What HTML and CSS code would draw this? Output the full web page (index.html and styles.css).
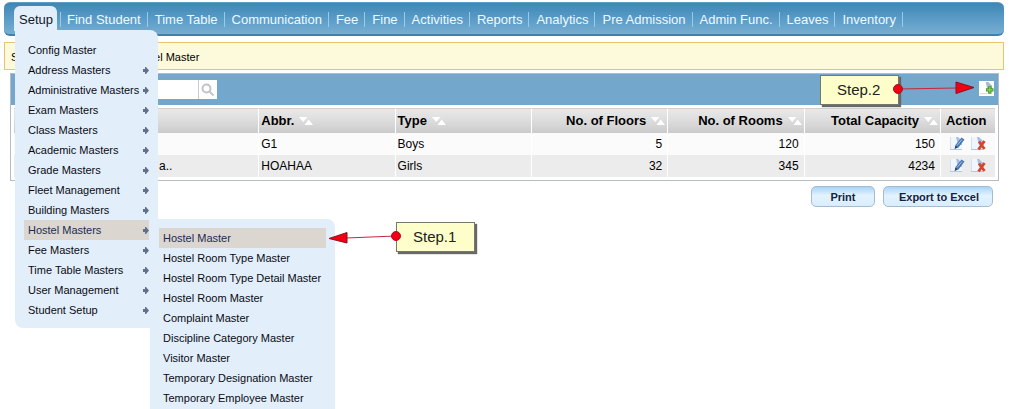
FILE: index.html
```html
<!DOCTYPE html>
<html lang="en">
<head>
<meta charset="utf-8">
<title>Hostel Master</title>
<link rel="stylesheet" href="styles.css">
</head>
<body>
<svg class="defs" width="0" height="0" aria-hidden="true">
  <symbol id="sort" viewBox="0 0 14 8"><path d="M0 0h8.500L4.200 5zM5.500 8h8.500L9.700 2.500z" fill="#fff"/></symbol>
  <symbol id="arrow" viewBox="0 0 6 7"><path d="M0 2h2V0h1l3 3.500L3 7H2V5H0z" fill="#62708c"/></symbol>
  <symbol id="page" viewBox="0 0 16 16"><path d="M1 1h8l4 4v9H1z" fill="#f1f6fd"/><path d="M1 13.500h12" stroke="#b5c6e0" fill="none"/><path d="M1.500 1v12" stroke="#d5dfee"/><path d="M7 1h2l4 4v4H9z" fill="#a9bfe2"/></symbol>
  <symbol id="edit" viewBox="0 0 16 16"><use href="#page"/><path d="M6 12.500 6.500 9 12.500 1.500 15.500 3.500 9.500 11.500z" fill="#4778b2"/><path d="M8 9.500 13 3.500" stroke="#a9c9ea"/><path d="M5.500 13 6.500 9.500 8.500 11.500z" fill="#243c66"/></symbol>
  <symbol id="remove" viewBox="0 0 16 16"><use href="#page"/><path d="M9 5.500l5.500 7.500M14.500 5l-6 8.500" stroke="#d4472f" stroke-width="2.800"/></symbol>
  <symbol id="add" viewBox="0 0 16 16"><path d="M0 0h16v16H0z" fill="#fff"/><path d="M7 1h3l4 4v4H9z" fill="#a9bad0"/><path d="M1 13.500h8" stroke="#cbd5e2"/><path d="M11.500 5.500v8M7.500 9.500h8" stroke="#43962b" stroke-width="3.600"/><path d="M11.500 6.500v6M8.500 9.500h6" stroke="#8edb55" stroke-width="1.200"/></symbol>
</svg>

<nav class="nav">
  <div class="nav-active">
    <a class="tab" href="#">Setup</a>
    <ul class="menu">
      <li><a href="#">Config Master</a></li>
      <li><a href="#">Address Masters<svg class="arrow"><use href="#arrow"/></svg></a></li>
      <li><a href="#">Administrative Masters<svg class="arrow"><use href="#arrow"/></svg></a></li>
      <li><a href="#">Exam Masters<svg class="arrow"><use href="#arrow"/></svg></a></li>
      <li><a href="#">Class Masters<svg class="arrow"><use href="#arrow"/></svg></a></li>
      <li><a href="#">Academic Masters<svg class="arrow"><use href="#arrow"/></svg></a></li>
      <li><a href="#">Grade Masters<svg class="arrow"><use href="#arrow"/></svg></a></li>
      <li><a href="#">Fleet Management<svg class="arrow"><use href="#arrow"/></svg></a></li>
      <li><a href="#">Building Masters<svg class="arrow"><use href="#arrow"/></svg></a></li>
      <li class="open"><a class="selected" href="#">Hostel Masters<svg class="arrow"><use href="#arrow"/></svg></a>
        <ul class="submenu">
          <li><a class="selected" href="#">Hostel Master</a></li>
          <li><a href="#">Hostel Room Type Master</a></li>
          <li><a href="#">Hostel Room Type Detail Master</a></li>
          <li><a href="#">Hostel Room Master</a></li>
          <li><a href="#">Complaint Master</a></li>
          <li><a href="#">Discipline Category Master</a></li>
          <li><a href="#">Visitor Master</a></li>
          <li><a href="#">Temporary Designation Master</a></li>
          <li><a href="#">Temporary Employee Master</a></li>
        </ul>
      </li>
      <li><a href="#">Fee Masters<svg class="arrow"><use href="#arrow"/></svg></a></li>
      <li><a href="#">Time Table Masters<svg class="arrow"><use href="#arrow"/></svg></a></li>
      <li><a href="#">User Management<svg class="arrow"><use href="#arrow"/></svg></a></li>
      <li><a href="#">Student Setup<svg class="arrow"><use href="#arrow"/></svg></a></li>
    </ul>
  </div>
  <a class="nav-link" href="#">Find Student</a>
  <a class="nav-link" href="#">Time Table</a>
  <a class="nav-link" href="#">Communication</a>
  <a class="nav-link" href="#">Fee</a>
  <a class="nav-link" href="#">Fine</a>
  <a class="nav-link" href="#">Activities</a>
  <a class="nav-link" href="#">Reports</a>
  <a class="nav-link" href="#">Analytics</a>
  <a class="nav-link" href="#">Pre Admission</a>
  <a class="nav-link" href="#">Admin Func.</a>
  <a class="nav-link" href="#">Leaves</a>
  <a class="nav-link" href="#">Inventory</a>
</nav>

<div class="breadcrumb">Setup / Hostel Masters / Hostel Master</div>

<main>
  <section class="panel">
    <div class="toolbar">
      <form class="search">
        <input type="text" aria-label="Search hostels">
        <button type="button" aria-label="Search"><svg width="14" height="14" viewBox="0 0 14 14" fill="none" stroke="#c4c4c4" stroke-width="2"><circle cx="5.500" cy="5.500" r="4"/><path d="M8.500 8.500l4 4"/></svg></button>
      </form>
      <button class="add" type="button" aria-label="Add hostel"><svg width="15" height="15"><use href="#add"/></svg></button>
      <div class="callout step-two">Step.2
        <svg class="pointer" width="84" height="16" viewBox="0 0 84 16"><path d="M5 9 64 8" stroke="#c5283a"/><path d="M63 2 81 7.500 63 13.500z" fill="#f00012" stroke="#8d1020"/><circle cx="5" cy="9" r="4.500" fill="#f00012" stroke="#a81020"/></svg>
      </div>
    </div>
    <table>
      <colgroup><col class="c-name"><col class="c-data"><col class="c-data"><col class="c-data"><col class="c-data"><col class="c-data"><col></colgroup>
      <thead>
        <tr>
          <th></th>
          <th>Abbr.<svg class="sort"><use href="#sort"/></svg></th>
          <th>Type<svg class="sort"><use href="#sort"/></svg></th>
          <th class="num">No. of Floors<svg class="sort"><use href="#sort"/></svg></th>
          <th class="num">No. of Rooms<svg class="sort"><use href="#sort"/></svg></th>
          <th class="num">Total Capacity<svg class="sort"><use href="#sort"/></svg></th>
          <th class="action">Action</th>
        </tr>
      </thead>
      <tbody>
        <tr>
          <td></td><td>G1</td><td>Boys</td><td class="num">5</td><td class="num">120</td><td class="num">150</td>
          <td class="action"><div class="actions"><button type="button" aria-label="Edit"><svg width="16" height="16"><use href="#edit"/></svg></button><button type="button" aria-label="Delete"><svg width="16" height="16"><use href="#remove"/></svg></button></div></td>
        </tr>
        <tr>
          <td class="name">a..</td><td>HOAHAA</td><td>Girls</td><td class="num">32</td><td class="num">345</td><td class="num">4234</td>
          <td class="action"><div class="actions"><button type="button" aria-label="Edit"><svg width="16" height="16"><use href="#edit"/></svg></button><button type="button" aria-label="Delete"><svg width="16" height="16"><use href="#remove"/></svg></button></div></td>
        </tr>
      </tbody>
    </table>
  </section>
  <div class="buttons">
    <button type="button">Print</button>
    <button type="button">Export to Excel</button>
  </div>
</main>

<div class="callout step-one">Step.1
  <svg class="pointer" width="74" height="16" viewBox="0 0 74 16"><path d="M18 10 68 8" stroke="#c5283a"/><path d="M1 10.500 19 4.500V15z" fill="#f00012" stroke="#8d1020"/><circle cx="68" cy="8" r="4.500" fill="#f00012" stroke="#a81020"/></svg>
</div>
</body>
</html>
```

FILE: styles.css
```css
* { box-sizing: border-box; }
body {
  min-height: 100vh;
  margin: 0;
  padding: 2px 16px 0 4px;
  background: #fff;
  color: #000;
  font: 11px/20px "Liberation Sans", Arial, sans-serif;
}
a { color: inherit; text-decoration: none; }
ul { list-style: none; margin: 0; padding: 0; }
button, input { font: inherit; margin: 0; padding: 0; }
svg { display: block; }
.defs { position: absolute; }

.nav {
  display: flex;
  height: 34px;
  padding: 3px 10px 0;
  border-top: 1px solid #5f9cc6;
  border-bottom: 2px solid #3f83ad;
  border-radius: 6px;
  background: linear-gradient(#3e87b5, #5d9dc8 55%, #79add0);
  color: #eefaff;
  font-size: 13px;
}
.nav-active { position: relative; margin-right: 3px; }
.tab {
  display: block;
  height: 25px;
  padding: 4px 4px 0 5px;
  border-radius: 6px 6px 0 0;
  background: #e2effa;
  color: #101828;
}
.nav-link {
  height: 15px;
  margin-top: 6px;
  padding: 0 6px 0 7px;
  border-right: 1px solid #93cdee;
  line-height: 15px;
  white-space: nowrap;
}
.nav-active + .nav-link { border-left: 1px solid #93cdee; padding-left: 6px; }

.menu, .submenu {
  position: absolute;
  background: #e2effa;
  color: #0a0a14;
  font-size: 11px;
  white-space: nowrap;
}
.menu {
  z-index: 2;
  top: 24px;
  left: 1px;
  width: 143px;
  padding: 10px 9px 8px;
  border-radius: 0 8px 8px 8px;
}
.submenu {
  top: -1px;
  left: 126px;
  width: 185px;
  padding: 9px 9px 1px;
  border-radius: 0 8px 0 0;
}
.open { position: relative; }
.menu a {
  display: flex;
  align-items: center;
  justify-content: space-between;
  height: 20px;
  padding-left: 4px;
}
.menu .selected { background: #dbd7d0; color: #1c2c50; }
.arrow { width: 6px; height: 7px; }

.breadcrumb {
  height: 28px;
  margin-top: 6px;
  padding: 4px 6px;
  border: 1px solid #e6c56c;
  background: #fcfadb;
}

main { padding: 3px 5px 0 6px; }
.panel { border: 1px solid #b7bcc2; }
.toolbar {
  position: relative;
  display: flex;
  align-items: center;
  justify-content: space-between;
  height: 31px;
  padding: 0 4px;
  background: #73a7cb;
}
.search { display: flex; height: 19px; background: #fff; }
.search input { width: 183px; border: 0; background: #fff; }
.search button { width: 19px; padding: 2px; border: 0; border-left: 1px solid #c5cdd3; background: #fff; }
.add { border: 0; background: none; margin-top: -3px; }

table {
  width: calc(100% - 6px);
  margin: 3px;
  border-collapse: separate;
  border-spacing: 0;
  table-layout: fixed;
  font-size: 12px;
}
.c-name { width: 25%; }
.c-data { width: 13.9%; }
th, td { height: 22px; padding: 0 5px 0 2px; border-right: 1px solid #fff; text-align: left; line-height: 16px; white-space: nowrap; }
th { height: 25px; border-top: 1px solid #cfcfcf; background: linear-gradient(#e9e9e9, #dcdcdc 50%, #cbcbcb); font-size: 13px; }
td { background: #fbfbfb; }
tbody tr + tr td { background: #ececec; }
tr > :last-child { border-right: 0; }
.num { text-align: right; }
th.num { padding-right: 2px; }
.name { padding-left: 145px; }
th.action, td.action { padding: 0 5px; }
.sort { display: inline-block; width: 14px; height: 8px; margin-left: 5px; }
.actions { display: flex; gap: 5px; padding-left: 3px; }
.actions button { border: 0; background: none; }

.buttons { display: flex; justify-content: flex-end; gap: 8px; padding: 5px 6px 0; }
.buttons button {
  height: 21px;
  padding: 0 18px;
  border: 1px solid #a5bccf;
  border-radius: 5px;
  background: linear-gradient(#a9d4f7, #e3f3ff 45%, #d8edfd);
  color: #10243f;
  font-weight: bold;
  line-height: 18px;
}
.buttons button:first-child { min-width: 64px; }
.buttons button + button { padding: 0 13px 0 15px; }

.callout {
  position: absolute;
  z-index: 3;
  width: 79px;
  height: 30px;
  padding-left: 16px;
  border: 1px solid #77776c;
  background: #fefecb;
  box-shadow: 2px 2px 1px #686868;
  color: #222;
  font-size: 15px;
  line-height: 28px;
}
.pointer { position: absolute; }
.step-one { top: 222px; left: 396px; }
.step-one .pointer { top: 5px; right: 72px; }
.step-two { top: 1px; right: 99px; }
.step-two .pointer { top: 4px; left: 72px; }
```
